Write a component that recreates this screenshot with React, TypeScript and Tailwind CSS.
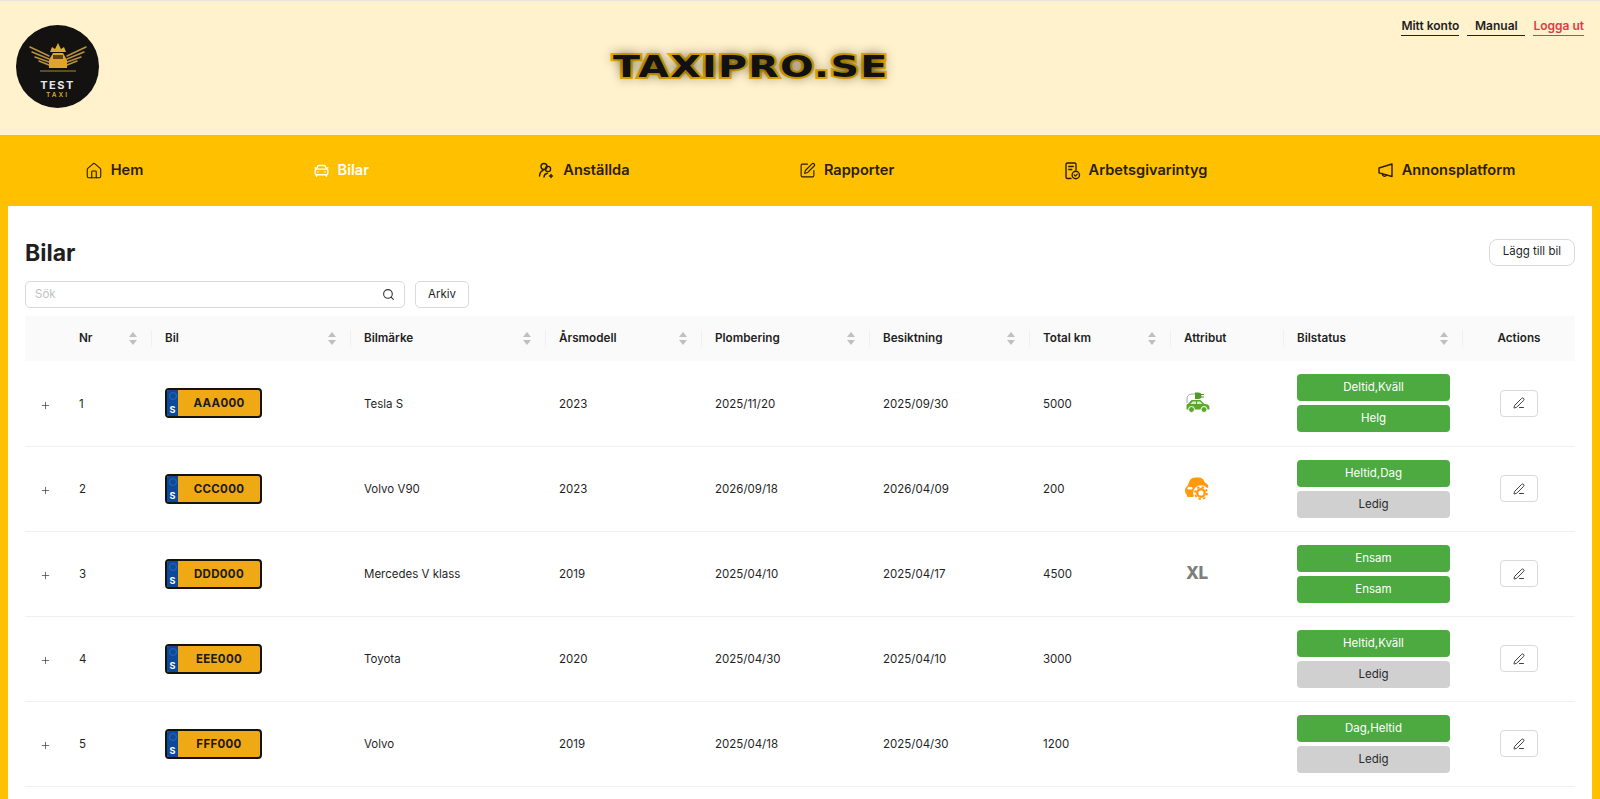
import { CarFront, House, PenLine, Plus, Search, SquarePen } from "lucide-react"
import type { ReactNode } from "react"

function StaffIcon() {
  return (
    <svg width="17" height="17" viewBox="0 0 17 17" fill="none" stroke="currentColor" strokeWidth="1.4" strokeLinecap="round">
      <circle cx="6" cy="4.5" r="3" />
      <path d="M1.5 14c.3-3 1.500-5 3.500-5.500" />
      <circle cx="10" cy="7" r="2.6" />
      <path d="M6 15c.2-2 1.500-3.500 3.500-3.700" />
      <path d="M13 12.500v3M11.500 14h3" strokeWidth="1.5" />
    </svg>
  )
}

function CertificateIcon() {
  return (
    <svg width="17" height="18" viewBox="0 0 17 18" fill="none" stroke="currentColor" strokeWidth="1.4" strokeLinecap="round" strokeLinejoin="round">
      <path d="M7 16.500H3.500a1.500 1.500 0 0 1-1.500-1.500V2.500A1.500 1.500 0 0 1 3.500 1h7A1.500 1.500 0 0 1 12 2.500V8" />
      <path d="M4.800 4.500h4.500M4.800 7.500h3" />
      <circle cx="11.800" cy="13" r="3.700" />
      <path d="M10.300 13l1.100 1.100 1.900-2" strokeWidth="1.200" />
    </svg>
  )
}

function AdIcon() {
  return (
    <svg width="17" height="17" viewBox="0 0 17 17" fill="none" stroke="currentColor" strokeWidth="1.4" strokeLinejoin="round" strokeLinecap="round">
      <path d="M15 2v12.500L2 10.800V6z" />
      <path d="M5.500 11.500c-.3 1.500.5 2.700 2 2.800 1 0 1.700-.5 2-1.300" />
    </svg>
  )
}

const NAV_ITEMS: { label: string; icon: ReactNode; active?: boolean }[] = [
  { label: "Hem", icon: <House size={18} strokeWidth={1.5} /> },
  { label: "Bilar", icon: <CarFront size={17} strokeWidth={2} />, active: true },
  { label: "Anställda", icon: <StaffIcon /> },
  { label: "Rapporter", icon: <SquarePen size={17} strokeWidth={1.6} /> },
  { label: "Arbetsgivarintyg", icon: <CertificateIcon /> },
  { label: "Annonsplatform", icon: <AdIcon /> },
]

const COLUMNS = [
  { label: "", width: "w-[41px]" },
  { label: "Nr", width: "w-[86px]", sort: true },
  { label: "Bil", width: "w-[199px]", sort: true },
  { label: "Bilmärke", width: "w-[195px]", sort: true },
  { label: "Årsmodell", width: "w-[156px]", sort: true },
  { label: "Plombering", width: "w-[168px]", sort: true },
  { label: "Besiktning", width: "w-[160px]", sort: true },
  { label: "Total km", width: "w-[141px]", sort: true },
  { label: "Attribut", width: "w-[113px]" },
  { label: "Bilstatus", width: "w-[179px]", sort: true },
  { label: "Actions", width: "w-[112px]", center: true },
]

function ElectricIcon() {
  return (
    <svg width="24" height="22" viewBox="0 0 24 22" fill="none" className="ml-[2px]">
      <path d="M1 11V7c0-3 2-5 5-5h3" stroke="#a8a8a8" strokeWidth="1" />
      <path d="M9 0.500h3.500c1.500 0 2.500 1 2.800 1.500H18v1h-2.700v1.500H18v1h-2.700c-.3.500-1.300 1.500-2.800 1.500H9z" fill="#4f9a24" />
      <path d="M0.500 17v-3.500c0-1 .5-1.500 1.500-1.500l3-3.500c.5-.5 1-.5 2-.5h6c1 0 1.500 0 2 .5l3.500 3.500c3 0 5 1 5 3.500v2H.500z" fill="#5ba82a" />
      <path d="M6.500 9.500h3.500V12H4.500zM11 9.500h3l2.500 2.500H11z" fill="#d7ecc6" />
      <circle cx="5.500" cy="17.500" r="3" fill="#5ba82a" stroke="#fff" />
      <circle cx="18" cy="17.500" r="3" fill="#5ba82a" stroke="#fff" />
    </svg>
  )
}

function ServiceIcon() {
  return (
    <svg width="26" height="24" viewBox="0 0 26 24" fill="none">
      <path d="M1 13c0-2 1-3 2.500-4l2-5C6.500 1.500 8.500 0.500 12 0.500h2c4 0 6 2 7 5l2.500 2c1 1 1 2.500 0 3.500H16L9 20H4.500c-1 0-1.500-.5-1.500-1.500V18c-1.500-1-2-3-2-5z" fill="#ff9a0d" />
      <rect x="3.500" y="10" width="5" height="2.500" rx="1.200" fill="#fff" />
      <circle cx="17" cy="16" r="7.800" fill="#fff" />
      <circle cx="17" cy="16" r="3.800" stroke="#ff9a0d" strokeWidth="2.400" />
      <circle cx="17" cy="16" r="6" stroke="#ff9a0d" strokeWidth="1.800" strokeDasharray="2.350 2.350" />
    </svg>
  )
}

const ROWS: { nr: number; plate: string; brand: string; year: string; seal: string; inspect: string; km: string; attr?: ReactNode; status: [string, string] }[] = [
  { nr: 1, plate: "AAA000", brand: "Tesla S", year: "2023", seal: "2025/11/20", inspect: "2025/09/30", km: "5000", attr: <ElectricIcon />, status: ["Deltid,Kväll", "Helg"] },
  { nr: 2, plate: "CCC000", brand: "Volvo V90", year: "2023", seal: "2026/09/18", inspect: "2026/04/09", km: "200", attr: <ServiceIcon />, status: ["Heltid,Dag", "Ledig"] },
  { nr: 3, plate: "DDD000", brand: "Mercedes V klass", year: "2019", seal: "2025/04/10", inspect: "2025/04/17", km: "4500", attr: <span className="block ml-[2px] text-[17px] leading-none font-extrabold text-[#7c7f7a] tracking-tight">XL</span>, status: ["Ensam", "Ensam"] },
  { nr: 4, plate: "EEE000", brand: "Toyota", year: "2020", seal: "2025/04/30", inspect: "2025/04/10", km: "3000", status: ["Heltid,Kväll", "Ledig"] },
  { nr: 5, plate: "FFF000", brand: "Volvo", year: "2019", seal: "2025/04/18", inspect: "2025/04/30", km: "1200", status: ["Dag,Heltid", "Ledig"] },
]

function Logo() {
  return (
    <div className="w-[83px] h-[83px] rounded-full bg-[#141210] flex flex-col items-center justify-end pb-[8px] shrink-0">
      <svg width="60" height="36" viewBox="0 0 60 36" fill="none">
        <g stroke="#b8923f" strokeWidth="1.500" strokeLinecap="round">
          <path d="M21 13L2 4M21 16L4 9M21 19L7 14M21 22L11 18" />
          <path d="M39 13L58 4M39 16L56 9M39 19L53 14M39 22L49 18" />
        </g>
        <path d="M22 9l2-5 3 2 3-6 3 6 3-2 2 5z" fill="#d9a93a" />
        <path d="M21 25v-8l4-7h10l4 7v8z" fill="#e0a526" />
        <rect x="25" y="12" width="10" height="4" fill="#5c4210" />
        <path d="M12 28h36" stroke="#a8842f" />
      </svg>
      <span className="text-[11px] leading-[12px] font-bold text-[#e8e8e8] tracking-[1.5px]">TEST</span>
      <span className="text-[6.5px] leading-[9px] font-semibold text-[#d8ac2c] tracking-[2px]">TAXI</span>
    </div>
  )
}

function SortArrows() {
  return (
    <svg width="8" height="13" viewBox="0 0 8 13" className="shrink-0 mr-[2px]">
      <path d="M4 0l4 5H0z" fill="#bfbfbf" />
      <path d="M4 13L0 8h8z" fill="#bfbfbf" />
    </svg>
  )
}

function Plate({ text }: { text: string }) {
  return (
    <div className="w-[97px] h-[30px] rounded-[4px] border-2 border-[#15120c] bg-[#efa914] flex overflow-hidden">
      <div className="w-[11px] bg-[#0b4a9b] flex flex-col items-center justify-between pt-[2px] pb-[1px]">
        <span className="w-[8px] h-[8px] rounded-full border border-[#2a66b8]" />
        <span className="text-[9px] leading-[10px] font-bold text-white">S</span>
      </div>
      <div className="flex-1 text-center text-[11.5px] leading-[26px] font-bold text-[#1d1a10] tracking-[0.3px]">{text}</div>
    </div>
  )
}

function StatusPill({ text }: { text: string }) {
  const free = text === "Ledig"
  return (
    <div className={`h-[27px] rounded-[4px] text-[11.5px] leading-[27px] text-center ${free ? "bg-[#d0d0d0] text-[#2b2b2b]" : "bg-[#4caa41] text-white"}`}>
      {text}
    </div>
  )
}

export default function App() {
  return (
    <div className="h-[799px] overflow-hidden bg-[#ffc000] font-['Inter',sans-serif] text-[#1f1f1f]">
      {/* Top banner */}
      <header className="h-[135px] bg-[#fff2cc] border-t border-[#e6e6e0] flex items-start justify-between px-4 relative">
        <div className="pt-6">
          <Logo />
        </div>
        <div className="absolute left-[613px] top-[48px] font-['DejaVu_Sans',sans-serif] font-bold text-[30px] leading-[36px] tracking-[1px] origin-left scale-x-[1.318] text-[#111] [-webkit-text-stroke:4px_#f5b800] [paint-order:stroke_fill] [text-shadow:0_0_10px_rgba(60,50,20,0.9)]">
          TAXIPRO.SE
        </div>
        <nav className="flex gap-[8px] pt-[16px] text-[12px] font-semibold leading-[18px] whitespace-nowrap">
          <a className="border-b border-[#222] w-[58px] text-center">Mitt konto</a>
          <a className="border-b border-[#222] w-[58px] text-center">Manual</a>
          <a className="border-b border-[#e2394a] text-[#e2394a]">Logga ut</a>
        </nav>
      </header>

      {/* Main nav */}
      <nav className="h-[71px] pt-[1px] flex items-center justify-around">
        {NAV_ITEMS.map(item => (
          <a key={item.label} className={`flex items-center gap-[8px] text-[14.6px] font-semibold ${item.active ? "text-white" : "text-[#2b1d00]"}`}>
            {item.icon}
            <span>{item.label}</span>
          </a>
        ))}
      </nav>

      {/* Content */}
      <main className="mx-2 bg-white h-[593px] px-[17px] pt-[33px]">
        <div className="flex items-center justify-between h-[28px]">
          <h1 className="text-[23px] font-bold leading-[28px]">Bilar</h1>
          <button className="h-[27px] mb-[2px] px-[13px] rounded-lg border border-[#d9d9d9] text-[11.5px] bg-white">Lägg till bil</button>
        </div>
        <div className="flex items-center gap-[10px] mt-[14px] mb-[8px]">
          <div className="w-[380px] h-[27px] rounded-[5px] border border-[#d9d9d9] flex items-center justify-between px-[9px]">
            <span className="text-[11.5px] text-[#bfbfbf]">Sök</span>
            <Search size={13} strokeWidth={2} className="text-[#333]" />
          </div>
          <button className="w-[54px] h-[27px] rounded-[5px] border border-[#d9d9d9] text-[11.5px] bg-white">Arkiv</button>
        </div>

        <table className="w-[1550px] table-fixed border-collapse text-[11.5px]">
          <thead>
            <tr className="h-[45px] bg-[#fafafa]">
              {COLUMNS.map((col, i) => (
                <th key={i} className={`${col.width} px-[13px] text-[11.7px] font-semibold relative ${col.center ? "text-center" : "text-left"}`}>
                  <div className={`flex items-center ${col.center ? "justify-center" : "justify-between"}`}>
                    <span>{col.label}</span>
                    {col.sort && <SortArrows />}
                  </div>
                  {i > 0 && i < COLUMNS.length - 1 && (
                    <span className="absolute right-0 top-[14px] h-[17px] w-px bg-[#f0f0f0]" />
                  )}
                </th>
              ))}
            </tr>
          </thead>
          <tbody>
            {ROWS.map(row => (
              <tr key={row.nr} className="h-[85px] border-b border-[#f0f0f0]">
                <td className="pl-[13px] pt-[2px]">
                  <Plus size={11} strokeWidth={1.5} className="text-[#333] ml-[2px] mt-[2px]" />
                </td>
                <td className="px-[13px] pt-[2px]">{row.nr}</td>
                <td className="px-[13px]"><Plate text={row.plate} /></td>
                <td className="px-[13px] pt-[2px]">{row.brand}</td>
                <td className="px-[13px] pt-[2px]">{row.year}</td>
                <td className="px-[13px] pt-[2px]">{row.seal}</td>
                <td className="px-[13px] pt-[2px]">{row.inspect}</td>
                <td className="px-[13px] pt-[2px]">{row.km}</td>
                <td className="px-[13px]">{row.attr}</td>
                <td className="px-[13px]">
                  <div className="flex flex-col gap-1">
                    <StatusPill text={row.status[0]} />
                    <StatusPill text={row.status[1]} />
                  </div>
                </td>
                <td className="px-[13px]">
                  <button className="w-[38px] h-[27px] mx-auto rounded-[4px] border border-[#d9d9d9] flex items-center justify-center">
                    <PenLine size={12} strokeWidth={1.7} />
                  </button>
                </td>
              </tr>
            ))}
          </tbody>
        </table>
      </main>
    </div>
  )
}
